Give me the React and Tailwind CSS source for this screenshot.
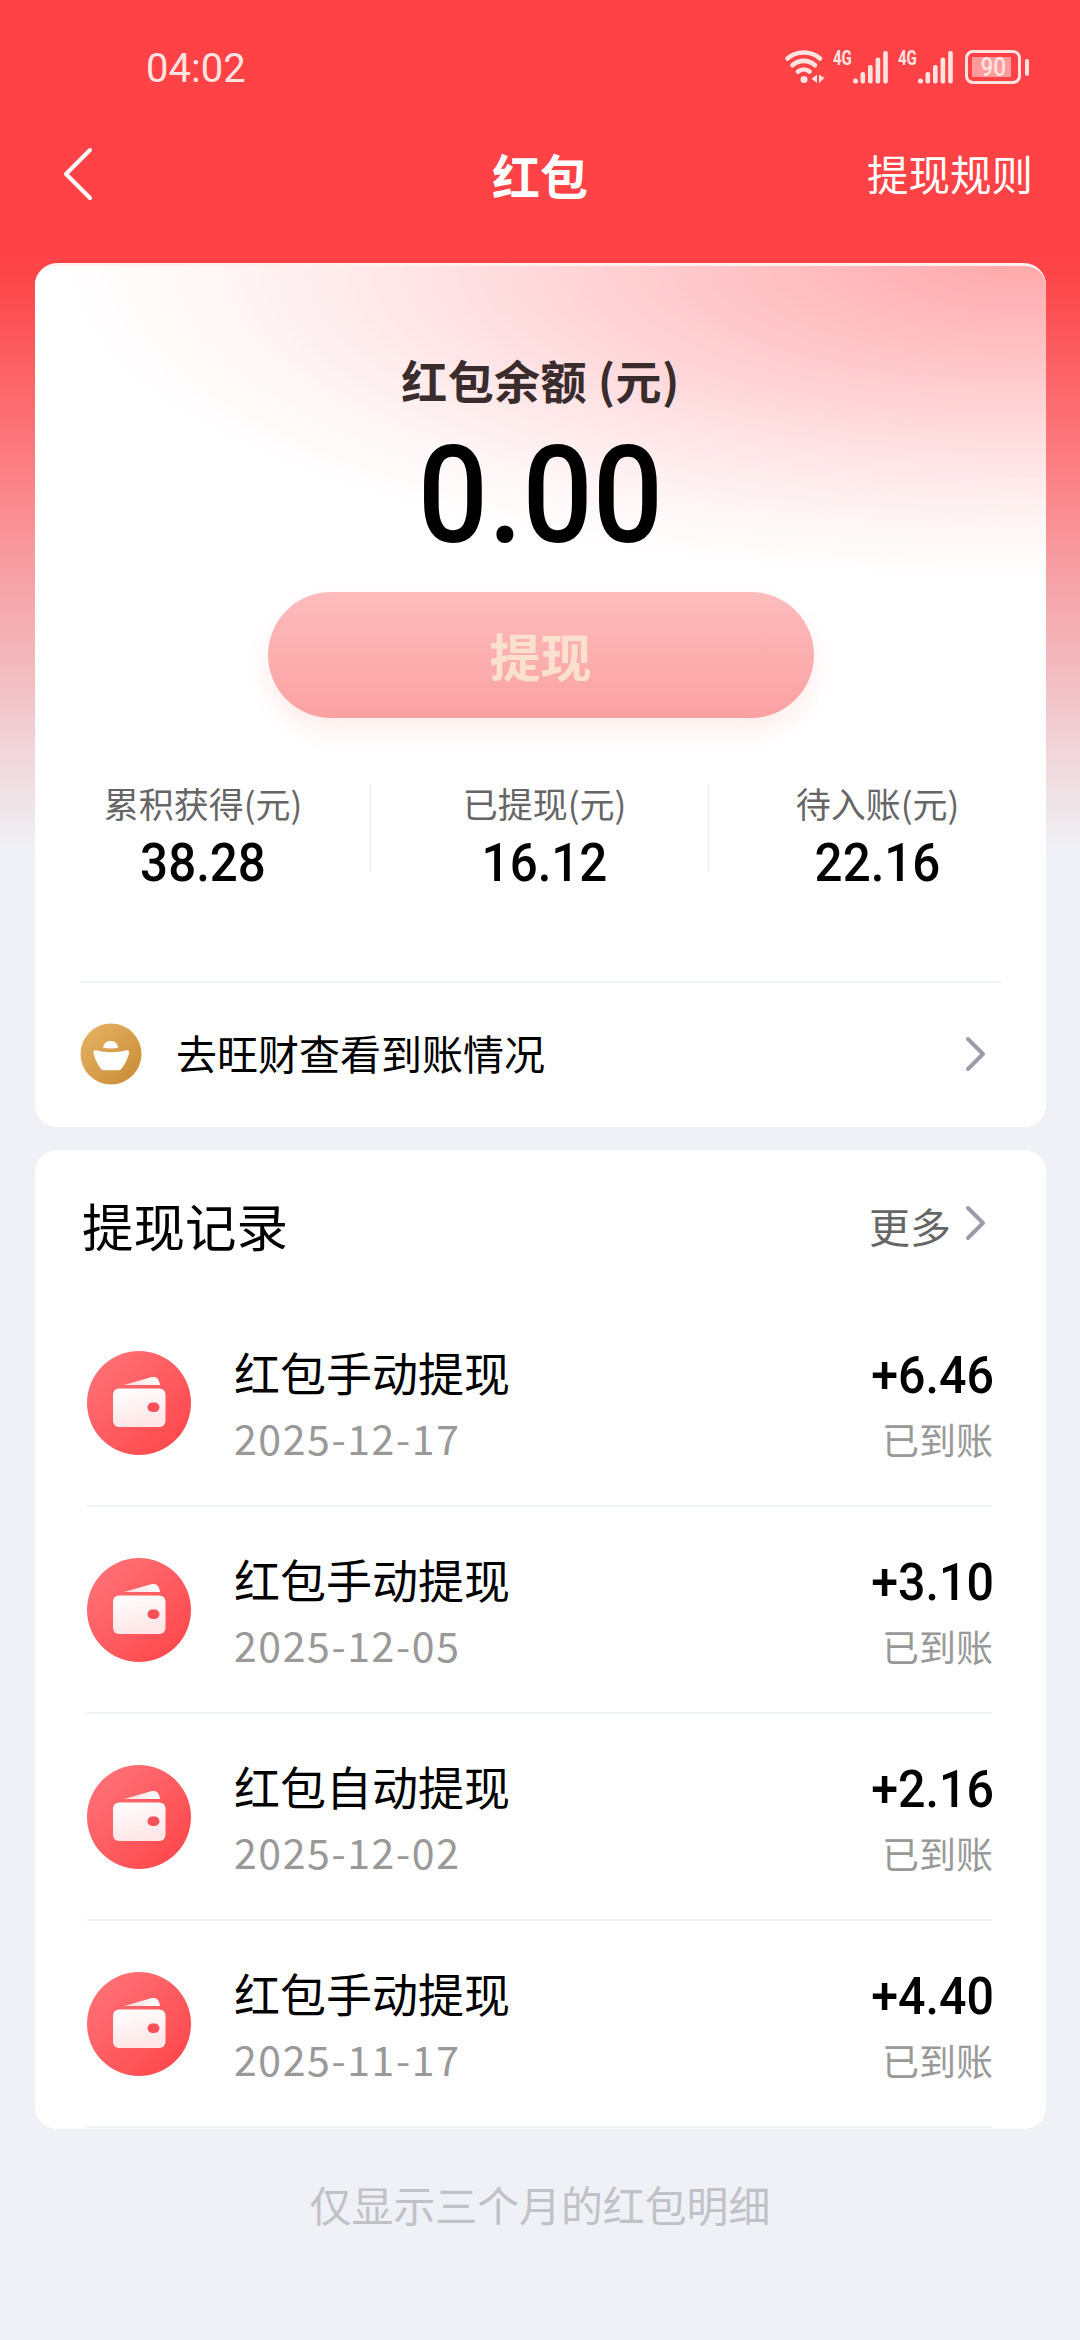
const records = [
  { id: 1, title: "红包手动提现", date: "2025-12-17", amount: "+6.46", status: "已到账" },
  { id: 2, title: "红包手动提现", date: "2025-12-05", amount: "+3.10", status: "已到账" },
  { id: 3, title: "红包自动提现", date: "2025-12-02", amount: "+2.16", status: "已到账" },
  { id: 4, title: "红包手动提现", date: "2025-11-17", amount: "+4.40", status: "已到账" },
];

const stats = [
  { label: "累积获得(元)", value: "38.28" },
  { label: "已提现(元)", value: "16.12" },
  { label: "待入账(元)", value: "22.16" },
];

function WifiIcon() {
  return (
    <svg width="42" height="36" viewBox="0 0 42 36" fill="none" stroke="#ffe3e1" strokeWidth="4.6" strokeLinecap="round">
      <path d="M3.5 9.5C12.5 1.500 27 1.500 36 9.500" />
      <path d="M8.500 16.200C15 10.400 24.500 10.400 31 16.200" />
      <path d="M14 22.600C17.400 19.800 22.200 19.800 25.600 22.600" />
      <circle cx="20" cy="30.500" r="3.500" fill="#ffe3e1" stroke="none" />
      <path d="M33 25.500v8.500l-5.500-4.200zM35 25.500v8.500l5.500-5z" fill="#ffe3e1" stroke="none" />
    </svg>
  );
}

function SignalIcon() {
  return (
    <div className="flex h-[34px] w-[56px] shrink-0">
      <span className="h-5 w-[20px] origin-left scale-x-75 text-[20px] leading-[16px] font-bold">4G</span>
      <svg width="36" height="34" viewBox="0 0 36 34" fill="#ffe3e1">
        <rect x="0" y="28.5" width="5" height="5" rx="2.5" />
        <rect x="7.5" y="22" width="4.6" height="11.5" rx="2" />
        <rect x="15" y="15" width="4.6" height="18.5" rx="2" />
        <rect x="22.6" y="7.5" width="4.6" height="26" rx="2" />
        <rect x="30.2" y="1" width="4.6" height="32.5" rx="2" />
      </svg>
    </div>
  );
}

function BatteryIcon() {
  return (
    <div className="flex items-center gap-1">
      <div className="h-[34px] w-[56px] rounded-[8px] border-3 border-[#ffe3e1] p-[4px]">
        <div className="flex h-full w-[39px] items-center justify-center bg-[#ff9b9b]">
          <span className="ml-[3px] scale-x-90 text-[25px] leading-none font-medium">90</span>
        </div>
      </div>
      <div className="h-[17px] w-[4px] rounded-full bg-[#ffe3e1]" />
    </div>
  );
}

function Chevron() {
  return (
    <svg width="24" height="38" viewBox="0 0 24 38" fill="none" stroke="#9b9caa" strokeWidth="4" strokeLinecap="round" strokeLinejoin="round">
      <path d="M4 4l15 15L4 34" />
    </svg>
  );
}

function IngotIcon() {
  return (
    <svg width="62" height="62" viewBox="0 0 62 62">
      <defs>
        <linearGradient id="gold" x1="0" y1="0" x2="1" y2="1">
          <stop offset="0" stopColor="#e6b566" />
          <stop offset="1" stopColor="#c98a34" />
        </linearGradient>
      </defs>
      <circle cx="31" cy="31" r="30.5" fill="url(#gold)" />
      <path d="M23 24.500c1-4.500 3.500-6.500 7.500-6.500s6.700 2 7.700 6.500c-4.500 1.400-10.700 1.400-15.200 0z" fill="#fff" />
      <path d="M16 27.200c9 2.600 21.500 2.600 30.500 0 2-.4 3 1.200 2.500 3.300-1.300 5.500-4 10.500-7.200 14.700-1.100 1.500-2 2-3.800 2H24.300c-1.800 0-2.700-.5-3.800-2-3.200-4.200-5.700-9.200-7-14.700-.5-2.100.5-3.700 2.500-3.300z" fill="#fff" />
    </svg>
  );
}

function WalletIcon() {
  return (
    <svg width="104" height="104" viewBox="0 0 104 104" className="shrink-0">
      <defs>
        <linearGradient id="coral" x1="0" y1="0" x2="1" y2="1">
          <stop offset="0" stopColor="#ff767b" />
          <stop offset="1" stopColor="#ff4347" />
        </linearGradient>
        <linearGradient id="flap" x1="0" y1="0.5" x2="1" y2="0.5">
          <stop offset="0" stopColor="#ffd9da" />
          <stop offset="1" stopColor="#fff" />
        </linearGradient>
        <linearGradient id="body" x1="0" y1="0" x2="0.3" y2="1">
          <stop offset="0" stopColor="#fff" />
          <stop offset="1" stopColor="#ffe6e7" />
        </linearGradient>
      </defs>
      <circle cx="52" cy="52" r="52" fill="url(#coral)" />
      <path d="M37 34l27-7.700c5-1.300 8 .7 9 7.700z" fill="url(#flap)" />
      <rect x="26" y="37.500" width="52.500" height="38.500" rx="6" fill="url(#body)" />
      <rect x="60.500" y="51.500" width="12" height="9.500" rx="4.700" fill="#f8515a" />
    </svg>
  );
}

function RecordRow({ record }) {
  return (
    <div className="flex h-[207px] items-center border-b-2 border-[#f0f1f2]">
      <WalletIcon />
      <div className="ml-[43px] flex-1 pt-[3px]">
        <p className="text-[46px] leading-[58px] text-black">{record.title}</p>
        <p className="mt-[8px] text-[41px] leading-[58px] tracking-[1.6px] text-[#999]">{record.date}</p>
      </div>
      <div className="pt-[9px] text-right">
        <p className="-mr-[2px] origin-right scale-x-[0.93] font-[Roboto] text-[52px] leading-[58px] font-medium text-black">{record.amount}</p>
        <p className="mt-[5px] -mr-[1px] text-[37px] leading-[58px] text-[#999]">{record.status}</p>
      </div>
    </div>
  );
}

export default function App() {
  return (
    <div className="h-[2340px] w-[1080px] overflow-hidden bg-[#f0f1f6] bg-[linear-gradient(180deg,#ff4246_0px,#ff4246_235px,#fc4447_270px,#fb8186_475px,#f5a5aa_590px,#f2babe_665px,#f0d5da_750px,#efe8eb_815px,#f0f1f6_850px)] font-['Noto_Sans_CJK_SC',sans-serif]">

      {/* STATUS BAR */}
      <div className="flex h-[134px] items-center justify-between pr-[51px] pl-[146px] font-[Roboto] text-[#ffe3e1]">
        <span className="pt-[4px] text-[40px] leading-none">04:02</span>
        <div className="flex items-center">
          <WifiIcon />
          <div className="ml-[7px] flex gap-[9px]">
            <SignalIcon />
            <SignalIcon />
          </div>
          <div className="ml-[11px]">
            <BatteryIcon />
          </div>
        </div>
      </div>

      {/* NAV BAR */}
      <div className="mb-[47px] grid h-[82px] grid-cols-3 items-center pr-[47px] pb-[3px] pl-[60px] text-white">
        <svg width="36" height="56" viewBox="0 0 36 56" fill="none" stroke="#fff" strokeWidth="4" strokeLinecap="round" strokeLinejoin="round">
          <path d="M30 4L6 28l24 24" />
        </svg>
        <h1 className="-ml-[13px] text-center text-[48px] leading-none font-bold">红包</h1>
        <span className="text-right text-[41.5px] leading-none">提现规则</span>
      </div>

      {/* BALANCE CARD */}
      <div className="mr-[34px] ml-[35px] h-[864px] rounded-[22px] border-t-3 border-[#fff0f0] bg-white bg-[radial-gradient(ellipse_960px_315px_at_985px_0px,#ffa9ac_0%,#ffc4c7_30%,#ffe0e2_58%,#fff5f5_82%,#ffffff_100%)] pt-[89px]">
        <p className="text-center text-[46px] leading-[48px] font-bold tracking-[0.4px] text-[#3a2c2c]">红包余额 (元)</p>
        <p className="mt-[38px] scale-x-[0.91] text-center font-[Roboto] text-[136px] leading-[110px] font-medium text-black">0.00</p>
        <button className="mx-auto mt-[41px] block h-[126px] w-[546px] rounded-full bg-linear-to-b from-[#fdbcbc] to-[#fba1a2] text-[51px] font-bold text-[#fae1cd] shadow-[0_12px_24px_rgba(255,110,90,0.12)]">
          提现
        </button>

        <div className="mt-[66px] grid h-[100px] grid-cols-[336px_338px_337px]">
          {stats.map((item, index) => (
            <div key={item.label} className={`relative pt-px text-center ${index === 1 ? "pl-[9px]" : ""}`}>
              <p className="text-[35px] leading-[36px] text-[#666]">{item.label}</p>
              <p className="mt-[20px] scale-x-[0.93] font-[Roboto] text-[53px] leading-[44px] font-medium text-black">{item.value}</p>
              {index < 2 && <div className="absolute top-0 right-0 h-[88px] w-px bg-[#ececee]" />}
            </div>
          ))}
        </div>

        <div className="mx-[45px] mt-[97px] border-t-2 border-[#f0f1f2]">
          <div className="flex h-[142px] items-center pr-[13px]">
            <IngotIcon />
            <span className="ml-[34px] flex-1 pb-[3px] text-[41px] leading-none text-black">去旺财查看到账情况</span>
            <Chevron />
          </div>
        </div>
      </div>

      {/* WITHDRAW RECORDS */}
      <div className="mt-[23px] mr-[34px] ml-[35px] h-[979px] rounded-[22px] bg-white pr-[54px] pl-[52px]">
        <div className="-ml-[5px] flex h-[150px] items-center pr-[4px]">
          <h2 className="flex-1 text-[51.500px] leading-none text-black">提现记录</h2>
          <span className="mr-[13px] text-[41px] leading-none text-[#666]">更多</span>
          <div className="pb-[4px]">
            <Chevron />
          </div>
        </div>
        {records.map((record) => (
          <RecordRow key={record.id} record={record} />
        ))}
      </div>

      <p className="mt-[46px] text-center text-[41.900px] leading-[58px] text-[#c1c2c7]">仅显示三个月的红包明细</p>
    </div>
  );
}
